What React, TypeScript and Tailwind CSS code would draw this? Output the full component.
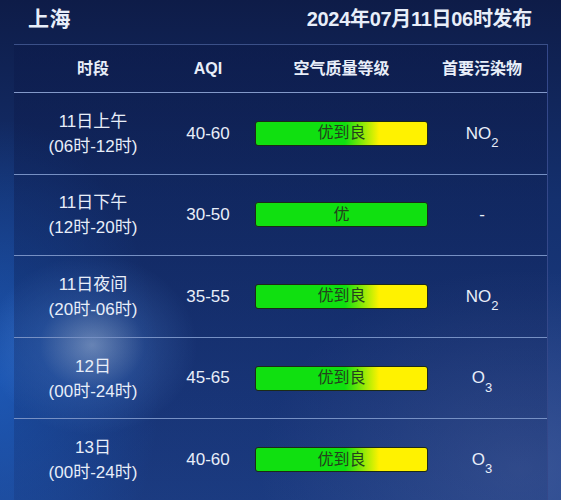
import React from "react";

type Row = {
  day: string;
  range: string;
  aqi: string;
  level: string;
  mixed: boolean;
  main: string;
  sub?: string;
};

const rows: Row[] = [
  { day: "11日上午", range: "(06时-12时)", aqi: "40-60", level: "优到良", mixed: true, main: "NO", sub: "2" },
  { day: "11日下午", range: "(12时-20时)", aqi: "30-50", level: "优", mixed: false, main: "-" },
  { day: "11日夜间", range: "(20时-06时)", aqi: "35-55", level: "优到良", mixed: true, main: "NO", sub: "2" },
  { day: "12日", range: "(00时-24时)", aqi: "45-65", level: "优到良", mixed: true, main: "O", sub: "3" },
  { day: "13日", range: "(00时-24时)", aqi: "40-60", level: "优到良", mixed: true, main: "O", sub: "3" },
];

const font = { fontFamily: '"Liberation Sans", "Noto Sans CJK SC", sans-serif' };

export default function App() {
  return (
    <div
      className="w-[561px] h-[500px] overflow-hidden text-[#e8eef9] bg-[radial-gradient(ellipse_105px_90px_at_92px_345px,rgba(190,220,255,0.7),rgba(90,150,235,0.3)_50%,transparent_100%),radial-gradient(ellipse_160px_260px_at_0px_380px,rgba(30,110,220,0.55),transparent_100%),radial-gradient(ellipse_260px_200px_at_520px_470px,rgba(90,110,170,0.45),transparent_100%),linear-gradient(180deg,#0e1c48_0%,#14306e_40%,#1a3a80_75%,#1d4088_100%)]"
      style={font}
    >
      <div className="h-[44px] flex items-center justify-between pl-[28px] pr-[29px] pb-[6px]">
        <h1 className="text-[21px] font-bold tracking-[0.5px]">上海</h1>
        <h1 className="text-[20px] font-bold tracking-[-0.3px]">2024年07月11日06时发布</h1>
      </div>

      <div className="ml-[14px] w-[534px] border-t border-[#3b5088] border-r border-r-[#34488a] bg-[linear-gradient(180deg,rgba(12,26,74,0.5),rgba(20,40,100,0.2))]">
        <div className="h-[48px] grid grid-cols-[158px_72px_195px_1fr] items-center text-[16px] font-bold border-b border-[#8399c9]">
          <div className="text-center">时段</div>
          <div className="text-center">AQI</div>
          <div className="text-center">空气质量等级</div>
          <div className="text-center pr-[22px]">首要污染物</div>
        </div>

        {rows.map((r, i) => (
          <div
            key={i}
            className="h-[81.6px] grid grid-cols-[158px_72px_195px_1fr] items-center border-b border-[#7690c4] text-[17px]"
          >
            <div className="flex flex-col items-center leading-[25px] mt-[1px]">
              <span>{r.day}</span>
              <span>{r.range}</span>
            </div>
            <div className="text-center">{r.aqi}</div>
            <div className="flex justify-center">
              <div
                className={`w-[173px] h-[25px] rounded-[3px] border border-[#1c2a18] flex items-center justify-center text-[16px] text-[#24421c] ${
                  r.mixed
                    ? "bg-[linear-gradient(90deg,#10e010_0%,#10e010_52%,#fff200_72%,#fff200_100%)]"
                    : "bg-[#10e010]"
                }`}
              >
                {r.level}
              </div>
            </div>
            <div className="text-center pr-[22px]">
              {r.main}
              {r.sub && <sub className="text-[13px] align-[-5px]">{r.sub}</sub>}
            </div>
          </div>
        ))}
      </div>
    </div>
  );
}
